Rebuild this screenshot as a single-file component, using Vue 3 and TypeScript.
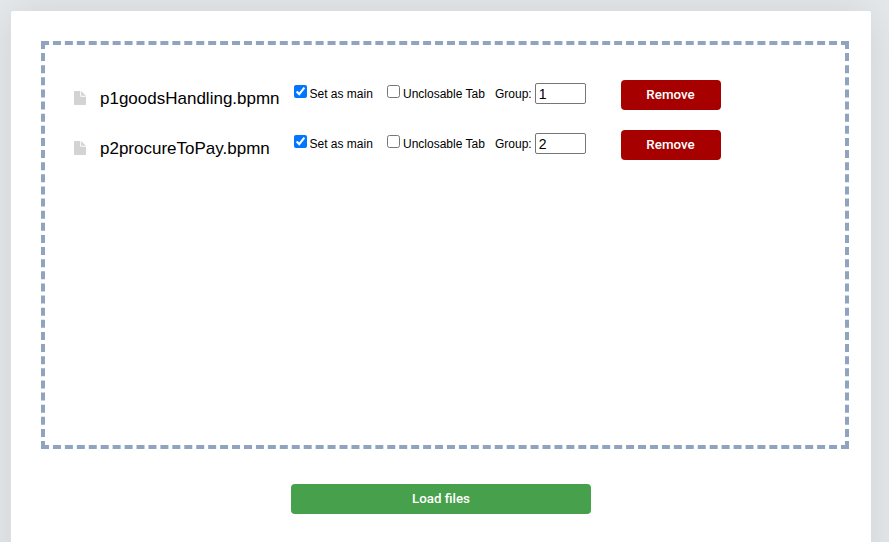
<script setup lang="ts">
import { ref } from 'vue'

interface BpmnFile {
  name: string
  main: boolean
  unclosable: boolean
  group: string
}

const files = ref<BpmnFile[]>([
  { name: 'p1goodsHandling.bpmn', main: true, unclosable: false, group: '1' },
  { name: 'p2procureToPay.bpmn', main: true, unclosable: false, group: '2' },
])

function remove(index: number): void {
  files.value.splice(index, 1)
}
</script>

<template>
  <main class="page">
    <section class="card">
      <div class="dropzone">
        <div v-for="(file, i) in files" :key="file.name" class="row">
          <svg class="icon" width="12" height="14" viewBox="0 0 12 14">
            <path fill="#d3d3d3" d="M.7 0H6.2v5c0 .4.3.7.7.7H12v7.6c0 .4-.3.7-.7.7H.7c-.4 0-.7-.3-.7-.7V.7C0 .3.3 0 .7 0zM7.1 0l4.9 4.8H7.1z" />
          </svg>
          <span class="name">{{ file.name }}</span>
          <div class="options">
            <label class="main"><input v-model="file.main" type="checkbox"><span>Set as main</span></label>
            <label class="tab"><input v-model="file.unclosable" type="checkbox"><span>Unclosable Tab</span></label>
            <label class="group"><span>Group:</span><input v-model="file.group" type="text"></label>
          </div>
          <button class="btn remove" type="button" @click="remove(i)">Remove</button>
        </div>
      </div>
      <button class="btn load" type="button">Load files</button>
    </section>
  </main>
</template>

<style>
body {
  background: #e5e9ec;
  overflow: hidden;
}
</style>

<style scoped>
.page {
  box-sizing: border-box;
  height: 542px;
  padding: 11px 18px 0 11px;
  font-family: "Liberation Sans", Arial, sans-serif;
  color: #000;
  overflow: hidden;
}
.card {
  box-sizing: border-box;
  height: 640px;
  padding: 30px 22px 0 30px;
  border-radius: 2px;
  background: #fff;
  box-shadow: 0 0 50px rgba(0, 0, 0, 0.1);
}
.dropzone {
  box-sizing: border-box;
  width: 808px;
  height: 408px;
  padding: 35px 29px;
  border: 4px dashed #90a4bf;
}
.row {
  display: flex;
  align-items: flex-start;
  height: 30px;
  margin-bottom: 20px;
}
.icon {
  flex: none;
  margin-top: 11px;
}
.name {
  width: 194px;
  margin: 9px 0 0 14px;
  font-size: 17px;
  line-height: 20px;
  white-space: nowrap;
}
.options {
  display: flex;
  width: 327px;
  font-size: 12px;
  line-height: 14px;
  white-space: nowrap;
}
label {
  display: flex;
  align-items: flex-start;
}
label span {
  margin-top: 7px;
}
input[type="checkbox"] {
  width: 13px;
  height: 13px;
  margin: 5px 2.5px 0 0;
}
.main {
  width: 93px;
}
.tab {
  width: 108px;
}
.tab input[type="checkbox"] {
  margin-right: 3px;
}
.group input {
  box-sizing: border-box;
  width: 51px;
  height: 21px;
  margin: 3px 0 0 3px;
  padding: 1px 3px;
  border: 1px solid #767676;
  border-radius: 2px;
  font: 14px "Liberation Sans", Arial, sans-serif;
}
.btn {
  display: block;
  height: 30px;
  padding: 0 0 2px;
  border: 0;
  border-radius: 4px;
  color: #fff;
  font: 500 13.333px Roboto, sans-serif;
}
.remove {
  width: 100px;
  padding-right: 1px;
  background: #a60000;
}
.load {
  width: 300px;
  margin: 35px 0 0 250px;
  background: #47a04b;
}
</style>
